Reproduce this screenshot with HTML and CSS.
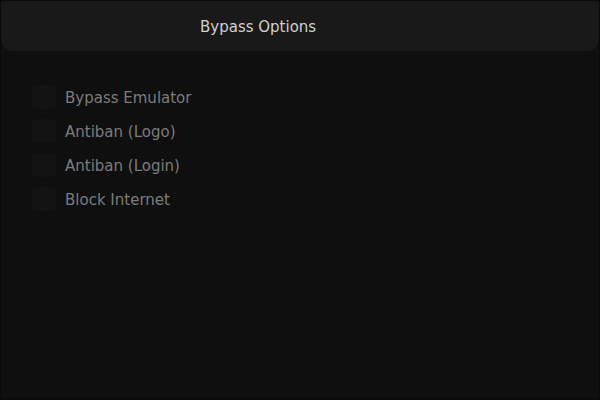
FILE: index.html
```html
<!DOCTYPE html>
<html lang="en">
<head>
<meta charset="utf-8">
<title>Bypass Options</title>
<link rel="stylesheet" href="styles.css">
</head>
<body>
<main class="panel">
  <header class="panel-header"><h1 class="title">Bypass Options</h1></header>
  <form class="options">
    <label class="option"><input class="check" type="checkbox">Bypass Emulator</label>
    <label class="option"><input class="check" type="checkbox">Antiban (Logo)</label>
    <label class="option"><input class="check" type="checkbox">Antiban (Login)</label>
    <label class="option"><input class="check" type="checkbox">Block Internet</label>
  </form>
</main>
</body>
</html>
```
FILE: styles.css
```css
* { box-sizing: border-box; }
body {
  margin: 0;
  background: #0f0f0f;
  font-family: "DejaVu Sans", Verdana, sans-serif;
  font-size: 15px;
}
.panel {
  min-height: 100vh;
  border: 1px solid #0a0a0a;
  border-bottom-width: 2px;
}
.panel-header {
  padding: 17px 0 15px 199px;
  background: #191919;
  border-radius: 4px 4px 12px 12px;
}
.title {
  margin: 0;
  font-size: 15px;
  line-height: 18px;
  font-weight: 400;
  color: #d0d0d0;
  white-space: nowrap;
}
.options {
  display: flex;
  flex-direction: column;
  align-items: flex-start;
  gap: 8px;
  padding: 34px 31px;
}
.option {
  display: flex;
  align-items: flex-start;
  gap: 9px;
  line-height: 26px;
  color: #7c7c7c;
}
.check {
  appearance: none;
  width: 24px;
  height: 24px;
  margin: 0;
  border-radius: 4px;
  background: #131313;
}
.check:checked { background: #7c7c7c; }
```
